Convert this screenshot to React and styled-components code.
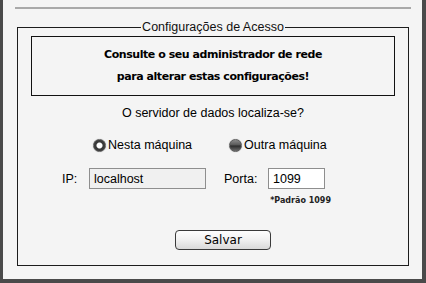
import React, { useState } from 'react';
import styled, { createGlobalStyle } from 'styled-components';

const GlobalStyle = createGlobalStyle`
  html, body {
    margin: 0;
    padding: 0;
    background: #f4f4f4;
  }
`;

const Frame = styled.div`
  box-sizing: border-box;
  width: 426px;
  height: 283px;
  background: #f4f4f4;
  border-left: 3px solid #4a4a4a;
  border-right: 4px solid #4a4a4a;
  border-bottom: 4px solid #4a4a4a;
  display: flex;
  flex-direction: column;
  font-family: "Liberation Sans", Arial, sans-serif;
  color: #000;
`;

const TopRule = styled.div`
  height: 2px;
  background: #a9a9a9;
  margin: 7px 11px 0 12px;
`;

const Group = styled.fieldset`
  box-sizing: border-box;
  margin: 11px 0 0 14px;
  width: 392px;
  height: 246px;
  border: 1px solid #1c1c1c;
  padding: 0 13px;
  display: flex;
  flex-direction: column;
  align-items: center;
`;

const Legend = styled.legend`
  margin: 0 auto;
  padding: 0 1px;
  font-size: 12.5px;
  line-height: 14px;
  color: #111;
`;

const Notice = styled.div`
  box-sizing: border-box;
  align-self: stretch;
  margin-top: 2px;
  height: 60px;
  border: 1px solid #111;
  display: flex;
  flex-direction: column;
  justify-content: center;
  text-align: center;
  font-family: "DejaVu Sans", Tahoma, sans-serif;
  font-weight: bold;
  font-size: 11px;
  line-height: 22px;
  letter-spacing: -0.45px;
`;

const Question = styled.div`
  margin-top: 9px;
  font-size: 12.5px;
  line-height: 16px;
`;

const RadioRow = styled.div`
  display: flex;
  gap: 37px;
  margin-top: 16px;
  align-self: flex-start;
  margin-left: 62px;
`;

const RadioLabel = styled.label`
  display: flex;
  align-items: center;
  gap: 2px;
  font-size: 12.5px;
  line-height: 16px;
  cursor: pointer;
`;

const Dot = styled.span`
  box-sizing: border-box;
  width: 13px;
  height: 13px;
  border-radius: 50%;
  background: ${p => (p.$on
    ? 'radial-gradient(circle, #fff 0 2.5px, #3a3a3a 3.5px 100%)'
    : 'linear-gradient(#8a8a8a 0%, #555 48%, #2a2a2a 52%, #6e6e6e 100%)')};
  border: 1px solid #5a5a5a;
  box-shadow: 0 0 1px rgba(0, 0, 0, 0.4);
`;

const FieldRow = styled.div`
  display: flex;
  align-items: center;
  margin-top: 15px;
  align-self: stretch;
  padding-left: 31px;
  font-size: 12.5px;
`;

const FieldLabel = styled.span`
  width: ${p => p.$w}px;
`;

const TextInput = styled.input`
  box-sizing: border-box;
  width: ${p => p.$w}px;
  height: 21px;
  border: 1px solid #8e8e8e;
  background: ${p => (p.$muted ? '#f0f0f0' : '#fff')};
  padding: 0 4px;
  font-family: "Liberation Sans", Arial, sans-serif;
  font-size: 12.5px;
  color: #000;
  outline: none;
`;

const Hint = styled.div`
  align-self: flex-end;
  margin-right: 64px;
  margin-top: 7px;
  font-family: "DejaVu Sans", Tahoma, sans-serif;
  font-weight: bold;
  font-size: 8px;
  line-height: 10px;
  color: #222;
`;

const SaveButton = styled.button`
  box-sizing: border-box;
  align-self: flex-start;
  margin: 24px 0 0 144px;
  width: 96px;
  height: 20px;
  border: 1px solid #3a3a3a;
  border-radius: 4px;
  background: linear-gradient(#fefefe 0%, #f2f2f2 45%, #d9d9d9 100%);
  font-family: "DejaVu Sans", Tahoma, sans-serif;
  font-size: 12px;
  color: #000;
  padding: 0;
  cursor: pointer;
`;

export default function App() {
  const [mode, setMode] = useState('local');

  return (
    <>
      <GlobalStyle />
      <Frame>
        <TopRule />
        <Group>
          <Legend>Configurações de Acesso</Legend>
          <Notice>
            <div>Consulte o seu administrador de rede</div>
            <div>para alterar estas configurações!</div>
          </Notice>
          <Question>O servidor de dados localiza-se?</Question>
          <RadioRow>
            <RadioLabel onClick={() => setMode('local')}>
              <Dot $on={mode === 'local'} />
              Nesta máquina
            </RadioLabel>
            <RadioLabel onClick={() => setMode('remote')}>
              <Dot $on={mode === 'remote'} />
              Outra máquina
            </RadioLabel>
          </RadioRow>
          <FieldRow>
            <FieldLabel $w={27}>IP:</FieldLabel>
            <TextInput $w={117} $muted defaultValue="localhost" />
            <FieldLabel $w={18} />
            <FieldLabel $w={44}>Porta:</FieldLabel>
            <TextInput $w={57} defaultValue="1099" />
          </FieldRow>
          <Hint>*Padrão 1099</Hint>
          <SaveButton>Salvar</SaveButton>
        </Group>
      </Frame>
    </>
  );
}
